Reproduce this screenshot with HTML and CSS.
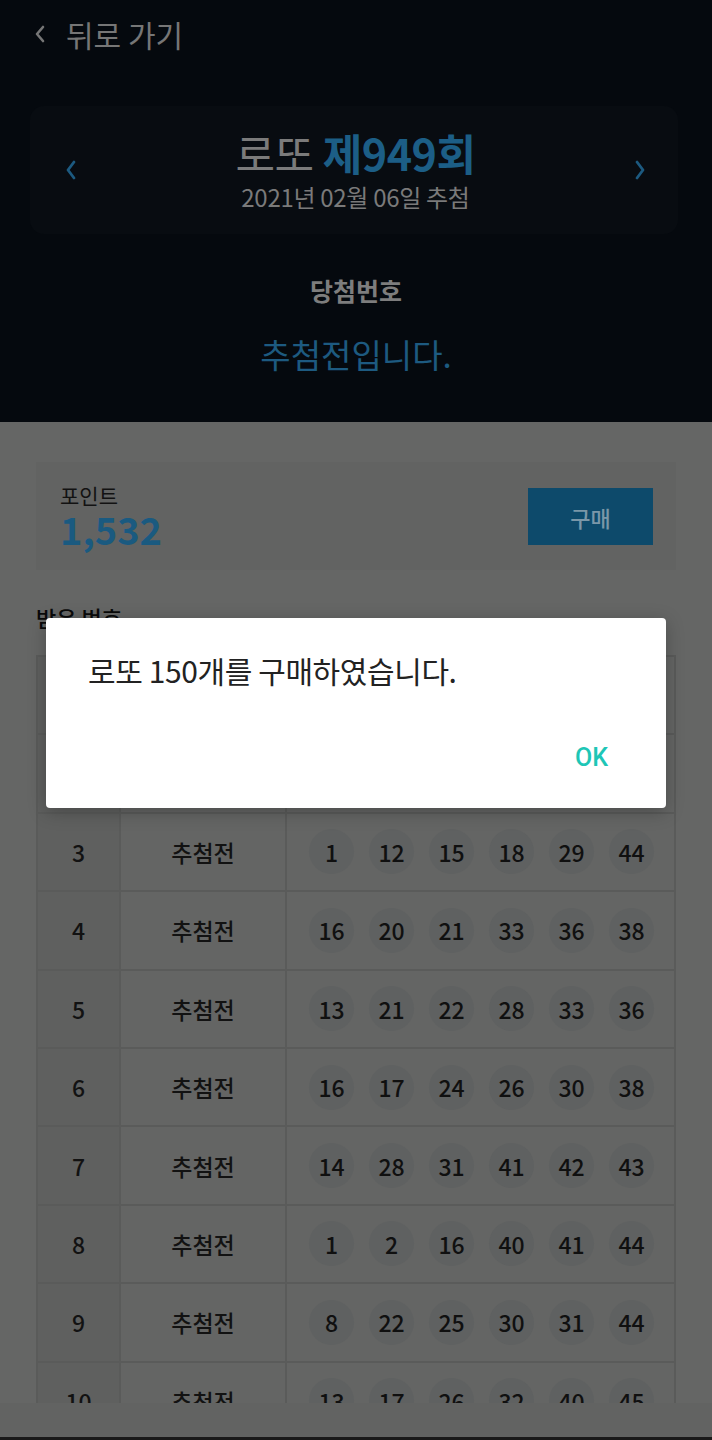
FILE: index.html
```html
<!DOCTYPE html>
<html>
<head>
    <title>로또</title>
    <link rel="stylesheet" href="styles.css">
</head>
<body>
    <div class="screen">
        <div class="header">
            <div class="topbar">
                <svg class="back-icon" width="14" height="20" viewBox="0 0 14 20">
                    <path d="M10 3 L4 10 L10 17" fill="none" stroke="#767676" stroke-width="2.6" stroke-linecap="round" stroke-linejoin="round"/>
                </svg>
                <span class="back-text">뒤로 가기</span>
            </div>

            <div class="round-card">
                <svg class="nav-arrow" width="16" height="24" viewBox="0 0 16 24">
                    <path d="M11 4 L5 12 L11 20" fill="none" stroke="#1c5a80" stroke-width="2.8" stroke-linecap="round" stroke-linejoin="round"/>
                </svg>
                <div class="round-info">
                    <div class="round-title">로또 <b>제949회</b></div>
                    <div class="round-date">2021년 02월 06일 추첨</div>
                </div>
                <svg class="nav-arrow" width="16" height="24" viewBox="0 0 16 24">
                    <path d="M5 4 L11 12 L5 20" fill="none" stroke="#1c5a80" stroke-width="2.8" stroke-linecap="round" stroke-linejoin="round"/>
                </svg>
            </div>

            <div class="win-label">당첨번호</div>
            <div class="win-result">추첨전입니다.</div>
        </div>

        <div class="main">
            <div class="point-card">
                <div>
                    <div class="point-label">포인트</div>
                    <div class="point-value">1,532</div>
                </div>
                <button class="buy-button">구매</button>
            </div>

            <div class="section-title">받은 번호</div>

            <div class="ticket-table" id="tickets"></div>
        </div>

        <div class="bottom-bar"></div>

        <div class="dialog">
            <div class="dialog-text">로또 150개를 구매하였습니다.</div>
            <div class="dialog-actions">
                <button class="dialog-ok">OK</button>
            </div>
        </div>
    </div>

    <script>
        let tickets = [
            [3, 9, 14, 22, 35, 41],
            [5, 11, 19, 27, 33, 40],
            [1, 12, 15, 18, 29, 44],
            [16, 20, 21, 33, 36, 38],
            [13, 21, 22, 28, 33, 36],
            [16, 17, 24, 26, 30, 38],
            [14, 28, 31, 41, 42, 43],
            [1, 2, 16, 40, 41, 44],
            [8, 22, 25, 30, 31, 44],
            [13, 17, 26, 32, 40, 45]
        ];

        let table = document.getElementById("tickets");

        tickets.forEach(function (numbers, i) {
            let row = document.createElement("div");
            row.className = "ticket-row";

            let balls = numbers.map(function (n) {
                return '<span class="ball">' + n + '</span>';
            }).join("");

            row.innerHTML =
                '<div class="cell cell-no">' + (i + 1) + '</div>' +
                '<div class="cell cell-state">추첨전</div>' +
                '<div class="cell cell-balls">' + balls + '</div>';

            table.appendChild(row);
        });
    </script>
</body>
</html>
```

FILE: styles.css
```css
* {
    box-sizing: border-box;
}
body {
    margin: 0;
    background-color: #656665;
    font-family: "Noto Sans CJK KR", "Noto Sans", sans-serif;
}
.screen {
    position: relative;
    width: 712px;
    height: 1440px;
    overflow: hidden;
    display: flex;
    flex-direction: column;
}
.header {
    height: 422px;
    flex-shrink: 0;
    background-color: #05090e;
    display: flex;
    flex-direction: column;
    align-items: center;
}
.topbar {
    align-self: stretch;
    height: 68px;
    padding-left: 33px;
    display: flex;
    align-items: center;
    gap: 19px;
}
.back-text {
    font-size: 30px;
    line-height: 40px;
    color: #767676;
}
.round-card {
    align-self: stretch;
    margin: 38px 34px 0 30px;
    height: 128px;
    padding: 0 30px 0 33px;
    background-color: #080c11;
    border-radius: 14px;
    display: flex;
    align-items: center;
    justify-content: space-between;
}
.round-info {
    text-align: center;
}
.round-title {
    font-size: 43px;
    line-height: 48px;
    color: #7b7b7b;
    letter-spacing: -0.5px;
}
.round-title b {
    color: #1c5e86;
    font-weight: 700;
}
.round-date {
    margin-top: 6px;
    font-size: 24px;
    line-height: 30px;
    color: #7a7a7a;
    letter-spacing: -0.3px;
}
.win-label {
    margin-top: 40px;
    font-size: 25px;
    line-height: 32px;
    font-weight: 700;
    color: #7d7d7d;
}
.win-result {
    margin-top: 26px;
    font-size: 33px;
    line-height: 44px;
    color: #1d5a80;
}
.main {
    height: 981px;
    flex-shrink: 0;
    overflow: hidden;
    padding: 40px 36px 0;
    background-color: #656665;
}
.point-card {
    height: 108px;
    background-color: #626362;
    padding: 0 23px 0 24px;
    display: flex;
    align-items: center;
    justify-content: space-between;
}
.point-label {
    font-size: 21px;
    line-height: 26px;
    color: #121212;
}
.point-value {
    font-size: 38px;
    line-height: 42px;
    font-weight: 700;
    color: #1a5a80;
}
.buy-button {
    width: 125px;
    height: 57px;
    border: none;
    background-color: #0d4a6b;
    color: #7a97a8;
    font-family: inherit;
    font-size: 22px;
    font-weight: 500;
    margin-top: 1px;
}
.section-title {
    margin-top: 32px;
    font-size: 22px;
    line-height: 30px;
    font-weight: 500;
    color: #0a0a0a;
}
.ticket-table {
    margin-top: 23px;
    border-top: 2px solid #5a5b5a;
    border-left: 2px solid #5a5b5a;
}
.ticket-row {
    display: grid;
    grid-template-columns: 83px 166px 1fr;
    height: 78.4px;
}
.cell {
    display: flex;
    align-items: center;
    justify-content: center;
    border-right: 2px solid #5a5b5a;
    border-bottom: 2px solid #5a5b5a;
    font-size: 23px;
    font-weight: 500;
    color: #121212;
    background-color: #646564;
}
.cell-no {
    background-color: #5f605f;
}
.cell-balls {
    justify-content: space-between;
    padding: 0 20px 0 22px;
}
.ball {
    width: 45px;
    height: 45px;
    border-radius: 50%;
    background-color: #5f6161;
    display: flex;
    align-items: center;
    justify-content: center;
    font-size: 23px;
    font-weight: 500;
    color: #101010;
}
.bottom-bar {
    flex: 1;
    background-color: #626362;
    border-bottom: 3px solid #1a1a1a;
}
.dialog {
    position: absolute;
    left: 46px;
    top: 618px;
    width: 620px;
    height: 190px;
    background-color: #fff;
    border-radius: 4px;
    box-shadow: 0 4px 18px rgba(0, 0, 0, 0.25);
    padding: 32px 30px 0 42px;
}
.dialog-text {
    font-size: 30px;
    line-height: 40px;
    color: #222;
    letter-spacing: -0.4px;
}
.dialog-actions {
    margin-top: 53px;
    display: flex;
    justify-content: flex-end;
}
.dialog-ok {
    border: none;
    background: none;
    padding: 0;
    margin-right: 28px;
    font-family: Roboto, sans-serif;
    font-size: 25px;
    font-weight: 500;
    color: #1ec6b6;
}
```
